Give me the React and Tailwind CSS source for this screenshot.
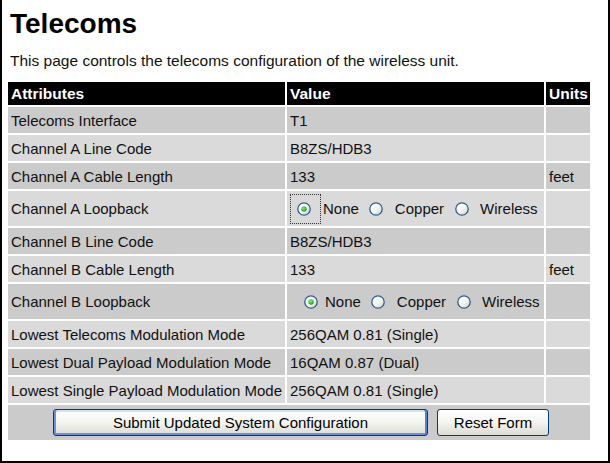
import React from 'react';

const rows = [
  { label: 'Telecoms Interface', value: 'T1', units: '' },
  { label: 'Channel A Line Code', value: 'B8ZS/HDB3', units: '' },
  { label: 'Channel A Cable Length', value: '133', units: 'feet' },
  { label: 'Channel A Loopback', loop: 'a', units: '' },
  { label: 'Channel B Line Code', value: 'B8ZS/HDB3', units: '' },
  { label: 'Channel B Cable Length', value: '133', units: 'feet' },
  { label: 'Channel B Loopback', loop: 'b', units: '' },
  { label: 'Lowest Telecoms Modulation Mode', value: '256QAM 0.81 (Single)', units: '' },
  { label: 'Lowest Dual Payload Modulation Mode', value: '16QAM 0.87 (Dual)', units: '' },
  { label: 'Lowest Single Payload Modulation Mode', value: '256QAM 0.81 (Single)', units: '' },
];

// XP style radio button
const Radio = ({ checked }) => (
  <svg width="14" height="14" viewBox="0 0 14 14" className="shrink-0 block">
    <defs>
      <linearGradient id="rfill" x1="0" y1="0" x2="1" y2="1">
        <stop offset="0" stopColor="#ffffff" />
        <stop offset="0.55" stopColor="#f3f3ee" />
        <stop offset="1" stopColor="#cfcfc6" />
      </linearGradient>
      <radialGradient id="rdot" cx="0.4" cy="0.35" r="0.7">
        <stop offset="0" stopColor="#7cf07c" />
        <stop offset="1" stopColor="#1a981a" />
      </radialGradient>
    </defs>
    <circle cx="7" cy="7" r="6.2" fill="url(#rfill)" stroke="#2f5f8f" strokeWidth="1.3" />
    {checked && <circle cx="7" cy="7" r="2.7" fill="url(#rdot)" />}
  </svg>
);

const Loopback = ({ focused }) => (
  <div className="flex items-center h-full">
    {focused ? (
      <span className="flex items-center w-[31px] h-[30px] border border-dotted border-[#333]">
        <span className="ml-[6px] flex"><Radio checked /></span>
      </span>
    ) : (
      <span className="ml-[14px] flex"><Radio checked /></span>
    )}
    <span className={focused ? 'ml-[2px]' : 'ml-[7px]'}>None</span>
    <span className="ml-[10px] flex"><Radio /></span>
    <span className="ml-[12px]">Copper</span>
    <span className="ml-[11px] flex"><Radio /></span>
    <span className="ml-[11px]">Wireless</span>
  </div>
);

const App = () => {
  return (
    <div
      className="w-[610px] h-[463px] bg-white border-2 border-t-0 border-black text-[#111] overflow-hidden"
      style={{ fontFamily: '"Liberation Sans", Arial, sans-serif' }}
    >
      <div className="pl-[4px]">
        <h1 className="text-[28px] font-bold leading-[32px] mt-[8px] ml-[4px] text-black">Telecoms</h1>
        <p className="text-[15.5px] leading-[17px] mt-[12px] ml-[4px]">
          This page controls the telecoms configuration of the wireless unit.
        </p>
        <table className="mt-[11px] border-separate border-spacing-[2px] text-[15px] leading-[17px]">
          <thead>
            <tr className="bg-black text-white font-bold text-[15.5px] h-[23px]">
              <th className="w-[277px] text-left pl-[3px] align-middle">Attributes</th>
              <th className="w-[257px] text-left pl-[3px] align-middle">Value</th>
              <th className="w-[44px] text-left pl-[3px] align-middle">Units</th>
            </tr>
          </thead>
          <tbody>
            {rows.map((r, i) => {
              const bg = i % 2 === 0 ? 'bg-[#cbcbcb]' : 'bg-[#dadada]';
              const h = r.loop ? 'h-[35px]' : 'h-[26px]';
              return (
                <tr key={r.label} className={h}>
                  <td className={`${bg} pl-[3px] whitespace-nowrap`}>{r.label}</td>
                  <td className={`${bg} pl-[3px] whitespace-nowrap`}>
                    {r.loop ? <Loopback focused={r.loop === 'a'} /> : r.value}
                  </td>
                  <td className={`${bg} pl-[3px]`}>{r.units}</td>
                </tr>
              );
            })}
            <tr className="h-[35px]">
              <td colSpan={3} className="bg-[#cbcbcb]">
                <div className="flex justify-center items-center gap-[9px] pl-[4px]">
                  <button className="w-[375px] h-[27px] rounded-[3px] border border-[#003c74] bg-gradient-to-b from-white via-[#f4f4f0] to-[#dcdcd4] shadow-[inset_2px_0_0_#6d92dc,inset_-2px_0_0_#5a7fd0,inset_0_2px_0_#cee2fb,inset_0_-2px_0_#6d92dc] text-[15px] text-black">
                    Submit Updated System Configuration
                  </button>
                  <button className="w-[112px] h-[27px] rounded-[3px] border border-[#003c74] bg-gradient-to-b from-white via-[#f4f4f0] to-[#dcdcd4] text-[15px] text-black">
                    Reset Form
                  </button>
                </div>
              </td>
            </tr>
          </tbody>
        </table>
      </div>
    </div>
  );
};

export default App;
